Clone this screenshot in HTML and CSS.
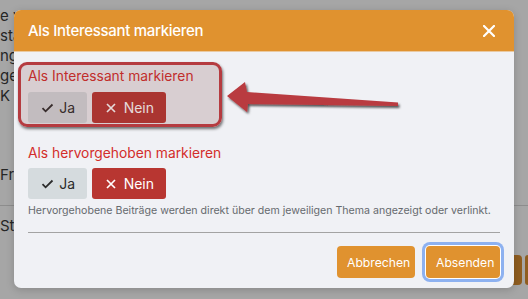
FILE: index.html
```html
<!DOCTYPE html>
<html lang="de">
<head>
<meta charset="utf-8">
<link rel="stylesheet" href="styles.css">
</head>
<body>
<div class="page">
  <div class="page-lines">
    <div>e w</div>
    <div>sta</div>
    <div>ng</div>
    <div>ge</div>
    <div>K K</div>
  </div>
  <div class="page-row">Fro</div>
  <div class="page-row page-row-sep">Ste</div>
  <div class="page-actions">
    <span class="page-btn"></span>
    <span class="page-btn page-btn-cut"></span>
  </div>
</div>

<div class="modal">
  <div class="modal-header">
    <span class="modal-title">Als Interessant markieren</span>
    <svg class="close" width="12" height="12" viewBox="0 0 12 12"><path d="M1 1L11 11M11 1L1 11" stroke="#fff" stroke-width="2.2" stroke-linecap="square"/></svg>
  </div>
  <div class="modal-body">
    <div class="field">
      <div class="field-label">Als Interessant markieren</div>
      <div class="toggle">
        <button class="btn btn-yes"><span class="ico"><svg width="13" height="10" viewBox="0 0 13 10"><path d="M1.5 5.2L4.6 8.3L11.5 1.5" fill="none" stroke="#2b2b2b" stroke-width="1.8"/></svg></span>Ja</button>
        <button class="btn btn-no"><span class="ico"><svg width="10" height="10" viewBox="0 0 10 10"><path d="M1 1L9 9M9 1L1 9" stroke="#fff" stroke-width="1.7"/></svg></span>Nein</button>
      </div>
    </div>
    <div class="field field-2">
      <div class="field-label">Als hervorgehoben markieren</div>
      <div class="toggle">
        <button class="btn btn-yes"><span class="ico"><svg width="13" height="10" viewBox="0 0 13 10"><path d="M1.5 5.2L4.6 8.3L11.5 1.5" fill="none" stroke="#2b2b2b" stroke-width="1.8"/></svg></span>Ja</button>
        <button class="btn btn-no"><span class="ico"><svg width="10" height="10" viewBox="0 0 10 10"><path d="M1 1L9 9M9 1L1 9" stroke="#fff" stroke-width="1.7"/></svg></span>Nein</button>
      </div>
      <div class="help">Hervorgehobene Beiträge werden direkt über dem jeweiligen Thema angezeigt oder verlinkt.</div>
    </div>
    <div class="divider"></div>
  </div>
  <div class="modal-footer">
    <button class="fbtn">Abbrechen</button>
    <button class="fbtn fbtn-focus">Absenden</button>
  </div>
  <div class="highlight"></div>
</div>

<svg class="arrow" width="528" height="299" viewBox="0 0 528 299">
  <defs>
    <filter id="sh" x="-10%" y="-50%" width="120%" height="200%">
      <feDropShadow dx="1.5" dy="2" stdDeviation="1.2" flood-color="#000" flood-opacity="0.65"/>
    </filter>
  </defs>
  <polygon points="227,96 245,82 247,92 398,102.5 398,106 248,104 247,112" fill="#b93a3f" filter="url(#sh)"/>
</svg>
</body>
</html>
```

FILE: styles.css
```css
* { box-sizing: border-box; }
html, body { margin: 0; padding: 0; }
body {
  width: 528px;
  height: 299px;
  overflow: hidden;
  background: #a6a6a6;
  font-family: Inter, "Noto Sans", sans-serif;
  position: relative;
}
.page {
  color: #262626;
  font-size: 15px;
  padding-top: 6px;
}
.page-lines div { line-height: 20px; height: 20px; }
.page-row { line-height: 20px; height: 20px; }
.page-lines + .page-row { margin-top: 59px; }
.page-row-sep {
  margin-top: 20px;
  border-top: 1px solid #8d8d8d;
  padding-top: 10px;
  height: 31px;
}
.page-actions {
  display: flex;
  gap: 3px;
  padding-left: 454px;
  margin-top: 19px;
}
.page-btn {
  flex: none;
  width: 68px;
  height: 30px;
  background: #8f5d20;
  border-radius: 4px;
}
.page-btn-cut {
  width: 3px;
  border-radius: 4px 0 0 4px;
}

.modal {
  position: absolute;
  left: 14px;
  top: 10px;
  width: 500px;
  height: 278px;
  background: #f0f1f5;
  border-radius: 7px;
  box-shadow: 0 2px 8px rgba(0,0,0,0.18);
  display: flex;
  flex-direction: column;
}
.modal-header {
  height: 42px;
  background: #e0922f;
  border-radius: 7px 7px 0 0;
  display: flex;
  align-items: center;
  justify-content: space-between;
  padding: 0 19px 0 14px;
  border-bottom: 1px solid #eac9a0;
}
.modal-title {
  color: #fff;
  font-size: 15px;
  font-weight: 500;
  letter-spacing: -0.3px;
}
.close { display: block; }

.modal-body {
  padding: 14px 14px 0;
}
.field-label {
  color: #d32d2a;
  font-size: 13.8px;
  line-height: 20px;
  margin-bottom: 6px;
}
.field-2 { margin-top: 20px; }
.field-2 .field-label { margin-bottom: 5px; }
.toggle {
  display: flex;
  gap: 5px;
}
.btn {
  height: 31px;
  border: 0;
  border-radius: 3px;
  padding: 0 12px;
  font-family: inherit;
  font-size: 14px;
  display: flex;
  align-items: center;
  gap: 5px;
}
.ico {
  width: 16px;
  display: flex;
  justify-content: center;
}
.ico svg { display: block; }
.btn-yes {
  background: #d5dbde;
  color: #2b2b2b;
  width: 59px;
}
.btn-no {
  background: #b83631;
  color: #fff;
  width: 74px;
}
.help {
  color: #666a6e;
  font-size: 10.6px;
  line-height: 16px;
  margin-top: 4px;
}
.divider {
  margin-top: 13px;
  height: 1px;
  background: #a3a3a3;
}
.modal-footer {
  display: flex;
  justify-content: flex-end;
  gap: 11px;
  padding: 13px 14px 0;
}
.fbtn {
  height: 32px;
  border: 0;
  border-radius: 4px;
  background: #e0922f;
  color: #fff;
  font-family: inherit;
  font-size: 12.2px;
  padding: 0 10px;
}
.fbtn:first-child { width: 78px; }
.fbtn-focus {
  width: 74px;
  box-shadow: 0 0 0 1px #fff, 0 0 0 4px #8db1f0;
}

.highlight {
  position: absolute;
  left: 4px;
  top: 52px;
  width: 204px;
  height: 65px;
  border: 3px solid #b53b40;
  border-radius: 9px;
  background: rgba(110, 50, 52, 0.18);
  box-shadow: 1px 2px 3px rgba(0,0,0,0.55);
  pointer-events: none;
}
.arrow {
  position: absolute;
  left: 0;
  top: 0;
  pointer-events: none;
}
```
